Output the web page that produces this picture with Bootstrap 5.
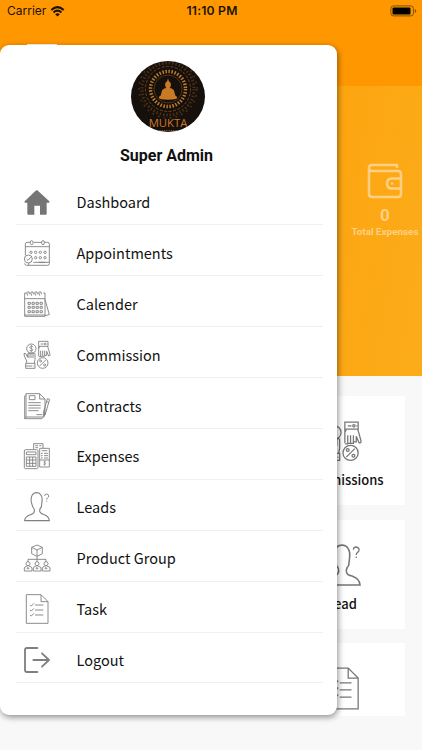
<!DOCTYPE html>
<html lang="en">

<head>
    <meta charset="UTF-8">
    <meta name="viewport" content="width=device-width, initial-scale=1.0">
    <title>Mukta</title>

    <link href="https://cdn.jsdelivr.net/npm/bootstrap@5.3.3/dist/css/bootstrap.min.css" rel="stylesheet">

    <style>
        body {
            height: 750px;
            background-color: #f8f8f8;
            color: #111;
            font-family: "Noto Sans CJK SC", "Open Sans", sans-serif;
        }

        /* status bar and header */
        .top-header {
            height: 86px;
            background-color: #ff9800;
        }

        .status-bar {
            height: 22px;
            padding: 0 5px 0 7px;
            color: #1d1300;
            font: 12px/22px Inter, sans-serif;
        }

        .status-bar > div {
            flex: 1 1 0;
        }

        .status-time {
            font-weight: 600;
            font-size: 12.2px;
            letter-spacing: .2px;
        }

        .menu-toggle {
            width: 30px;
            height: 4px;
            margin: 22px 0 0 27px;
            background-color: #fff;
        }

        /* totals */
        .hero {
            height: 290px;
            background: linear-gradient(100deg, #ff9800 20%, #fcac1a 100%);
            color: #ffd083;
            font-family: Roboto, sans-serif;
        }

        .hero-total {
            width: 74px;
            padding-top: 75px;
            font-weight: 700;
        }

        .hero-count {
            margin-top: 6px;
            font-size: 17px;
            line-height: 20px;
        }

        .hero-label {
            font-size: 9.9px;
            line-height: 13px;
            white-space: nowrap;
        }

        /* tiles */
        .tiles {
            height: 340px;
            padding: 20px 17px 0 0;
            gap: 14.5px;
            overflow: hidden;
        }

        .tile {
            width: 126px;
            height: 109px;
            flex: none;
            padding-top: 27px;
            background-color: #fff;
            font-size: 13px;
            font-weight: 500;
            line-height: 20px;
        }

        .tile svg {
            width: 37px;
            height: 37px;
            margin-bottom: 10px;
        }

        /* drawer */
        .drawer {
            top: 45px;
            left: 0;
            width: 337px;
            height: 670px;
            padding: 16px 14px 0 16px;
            background-color: #fff;
            border-radius: 9px;
            box-shadow: 1px 2px 6px rgba(0, 0, 0, .45);
        }

        .avatar {
            width: 74px;
            height: 71px;
            margin-left: -3px;
        }

        .user-name {
            margin: 12px 0 0 -6px;
            font: 700 16px/24px Roboto, sans-serif;
        }

        .drawer-menu {
            margin-top: 6.5px;
        }

        .menu-row {
            height: 50.9px;
            padding: 5px 0 0 7.5px;
            border-bottom: 1px solid #efefef;
            font-size: 14.5px;
            line-height: 20px;
        }

        .menu-row svg {
            width: 26px;
            height: 26px;
            margin-right: 27px;
        }

        .line-icon {
            fill: none;
            stroke: #777;
            stroke-width: 2.7;
            overflow: visible;
        }

        .menu-row .line-icon {
            stroke: #808080;
        }
    </style>
</head>

<body>
    <!-- shared icons -->
    <svg class="d-none">
        <symbol id="i-home" viewBox="0 0 78 78" overflow="visible">
            <path d="M39 3 76 37q3 4-2 4h-6v33q0 3-3 3H48V50H31v27H13q-3 0-3-3V41H4q-5 0-2-4L34 6q5-5 10 0z" fill="#757575" stroke="none" />
        </symbol>
        <symbol id="i-appointments" viewBox="0 0 78 78" overflow="visible">
            <path d="M4 46V12q0-5 5-5h9M29 7h22M62 7h9q5 0 5 5v59q0 5-5 5H8q-5 0-6-6M4 20h72M28 67h48M14 76v-7M44 67h20" />
            <rect x="19" y="2" width="8" height="12" rx="4" />
            <rect x="53" y="2" width="8" height="12" rx="4" />
            <circle cx="13" cy="57" r="12" />
            <path d="m8 57 4 4 8-9" />
            <g>
                <circle cx="21" cy="37" r="3.5" /><circle cx="35" cy="37" r="3.5" /><circle cx="49" cy="37" r="3.5" /><circle cx="63" cy="37" r="3.5" />
                <circle cx="35" cy="53" r="3.5" /><circle cx="49" cy="53" r="3.5" /><circle cx="63" cy="53" r="3.5" />
            </g>
        </symbol>
        <symbol id="i-calendar" viewBox="0 0 78 78" overflow="visible">
            <path d="M8 6H2v70h61V6h-5M2 23h61M2 72h61M63 25l13 46-13 3" />
            <path d="M11 14q-5-11 0-12 6-1 5 8M23 14q-5-11 0-12 6-1 5 8M35 14q-5-11 0-12 6-1 5 8M47 14q-5-11 0-12 6-1 5 8M17 6h3M29 6h3M41 6h3" />
            <path d="M12 34h7v6h-7zM24 34h7v6h-7zM36 34h7v6h-7zM48 34h7v6h-7zM12 46h7v6h-7zM24 46h7v6h-7zM36 46h7v6h-7zM48 46h7v6h-7zM12 59h7v6h-7zM24 59h7v6h-7zM36 59h7v6h-7zM48 59h7v6h-7z" />
        </symbol>
        <symbol id="i-commission" viewBox="0 0 78 78" overflow="visible">
            <circle cx="22" cy="20" r="14" />
            <path d="M27 14q-8-4-10 1c0 6 10 4 10 9q-2 5-10 1M22 9v22" stroke-width="2.2" />
            <path d="M8 64V57L1 42l-1-7q4-3 6 1l5 10V37q0-4 4-4v15M15 34q5-3 6 0v14M21 34q5-3 6 0v14M27 34q5-3 6 1v18l-2 11" />
            <path d="M5 64h28v15H5zM5 72h20M29 71v2" />
            <path d="M44-2h28v15H44zM50 6h8M68 6h2" />
            <circle cx="63" cy="6" r="2.5" />
            <path d="M44 13v29M50 26v18h-6M50 43h6V26M56 43h6V26M62 40h6V28l6 14q5 0 4-4l-4-15-3-10M44 20l3-7" />
            <circle cx="56" cy="63" r="16" />
            <circle cx="50" cy="57" r="3" />
            <circle cx="62" cy="69" r="3" />
            <path d="M65 54 47 72" />
        </symbol>
        <symbol id="i-contracts" viewBox="0 0 78 78" overflow="visible">
            <path d="M6 2h41l16 16v47l-5 7H6zM47 2v16h16M6 5l-4 4v68h52l6-7M2 77l5-6M61 48v22" />
            <path d="M16 8h17v12H16zM13 29h37M13 37h37M13 45h37M13 53h31M37 65h18" />
            <path d="m70 17 7 2-13 44-5 6-1-8zM68 26l7 2M59 61l6 2" />
        </symbol>
        <symbol id="i-expenses" viewBox="0 0 78 78" overflow="visible">
            <path d="M29 19V2h28v13M34 8h8M46 8h6M34 14h8" />
            <path d="M47 72V16h29v56zM53 23h17M51 31h5M60 31h12M51 38h5M60 38h12M51 45h5M60 45h12M47 51h29" />
            <path d="M65 56q-6-2-6 1c0 4 7 2 6 6q-1 3-7 1M62 53v15" stroke-width="2" />
            <rect x="1" y="20" width="41" height="57" rx="4" />
            <path d="M7 27h29v8H7zM7 42h29v28H7zM17 42v28M26 42v28M7 51h29M7 61h29" />
        </symbol>
        <symbol id="i-lead" viewBox="0 0 78 78" overflow="visible">
            <path d="M2 80q1-12 15-17 14-4 14-12 1-6-4-11-3-7-5-16C19 8 26-4 38-4s18 12 16 26l-2 17q-5 5-5 11c0 8 5 9 14 12q14 5 15 18z" stroke-width="3.3" />
            <path d="M62 6q0-6 6-6 6 1 6 6 0 4-4 6-2 2-2 5M68 20v3" />
        </symbol>
        <symbol id="i-group" viewBox="0 0 78 78" overflow="visible">
            <path d="m39 0 16 7v19l-16 8-16-8V7zM23 7l16 8 16-8M39 15v19M39 34v16M12 50v-7h54v7" />
            <g id="person">
                <circle cx="12" cy="56" r="6" />
                <path d="M1 78V69q1-4 7-5l4 4 4-4q7 1 8 5v9zM8 71h8" />
            </g>
            <use href="#person" x="27" />
            <use href="#person" x="54" />
        </symbol>
        <symbol id="i-task" viewBox="0 0 78 78" overflow="visible">
            <path d="M7-4h44l21 21v65H7zM51-4v21h21" />
            <path d="M33 27h25M33 42h25M33 57h25M18 27l4 3 8-8M18 42l4 3 8-8M18 57l4 3 8-8" />
        </symbol>
        <symbol id="i-logout" viewBox="0 0 78 78" overflow="visible">
            <path d="M40 3H9q-6 0-6 6v60q0 6 6 6h31M28 39h46M54 19l21 20-21 20" stroke-width="5.5" stroke-linecap="round" stroke-linejoin="round" />
        </symbol>
    </svg>

    <div class="position-relative h-100 overflow-hidden">
        <header class="top-header">
            <div class="status-bar d-flex align-items-center">
                <div class="d-flex align-items-center">
                    <span>Carrier</span>
                    <svg class="ms-1" width="15" height="11" viewBox="0 0 14 11" fill="none" stroke="#1d1300" stroke-width="2">
                        <path d="M.8 4Q7-1.700 13.200 4M3 6.400q4-3.500 8 0" />
                        <path d="M4.700 8.200Q7 6.400 9.300 8.200L7 10.600z" fill="#1d1300" stroke="none" />
                    </svg>
                </div>
                <div class="status-time text-center">11:10 PM</div>
                <div class="d-flex justify-content-end">
                    <svg width="27" height="12" viewBox="0 0 27 12">
                        <rect x=".9" y=".9" width="22.500" height="10" rx="2.500" fill="none" stroke="#80500a" />
                        <rect x="2.500" y="2.400" width="18" height="7" rx="1" fill="#000" />
                        <path d="M24.800 4v4q1.500-.5 1.500-2t-1.500-2" fill="#80500a" />
                    </svg>
                </div>
            </div>
            <div class="menu-toggle"></div>
        </header>

        <section class="hero d-flex justify-content-end">
            <div class="hero-total d-flex flex-column align-items-center">
                <svg width="38" height="38" viewBox="0 0 38 38" fill="none" stroke="#ffd083" stroke-width="2.600" stroke-linejoin="round">
                    <path d="M31 7V4H6Q3 4 3 7v26q0 3 3 3h26q3 0 3-3V13q0-3-3-3H6Q3 10 3 7" />
                    <path d="M35 17.500H26q-5 0-5 5t5 5h9" />
                    <circle cx="26" cy="22.500" r=".6" stroke-width="1.500" />
                </svg>
                <div class="hero-count">0</div>
                <div class="hero-label">Total Expenses</div>
            </div>
        </section>

        <main class="tiles d-flex flex-column align-items-end">
            <div class="tile d-flex flex-column align-items-center">
                <svg class="line-icon"><use href="#i-commission" /></svg>
                <span>Commissions</span>
            </div>
            <div class="tile d-flex flex-column align-items-center">
                <svg class="line-icon"><use href="#i-lead" /></svg>
                <span>Lead</span>
            </div>
            <div class="tile d-flex flex-column align-items-center">
                <svg class="line-icon"><use href="#i-task" /></svg>
            </div>
        </main>

        <aside class="drawer position-absolute">
            <div class="d-flex flex-column align-items-center">
                <svg class="avatar" viewBox="0 0 74 71">
                    <defs>
                        <clipPath id="round"><ellipse cx="37" cy="35.500" rx="37" ry="35.500" /></clipPath>
                    </defs>
                    <g clip-path="url(#round)">
                        <rect width="74" height="71" fill="#15100c" />
                        <g fill="none" stroke="#6d431d">
                            <circle cx="37" cy="28" r="26" stroke-width="3" stroke-dasharray="1.500 1.900" opacity=".6" />
                            <circle cx="37" cy="28" r="22.500" stroke-width="1" stroke-dasharray="3 1.500" />
                            <circle cx="37" cy="28" r="29" stroke-width="1.500" stroke-dasharray="2 4" opacity=".6" />
                            <circle cx="37" cy="28" r="17.500" stroke="#bd762a" stroke-width="3.500" stroke-dasharray="1.500 1.550" />
                            <circle cx="37" cy="28" r="14" stroke-width=".7" />
                        </g>
                        <!-- seated figure -->
                        <path fill="#c97a25" d="M37 17.500l1 3q2.500 1 1.800 4.500l-1 2q4 .7 4.500 3.500l1 4q2.500 1 1.700 2.500-.5 1.500-9 1.700-8.500-.2-9-1.700-.8-1.500 1.700-2.500l1-4q.5-2.800 4.500-3.500l-1-2q-.7-3.500 1.800-4.500z" />
                        <text x="37" y="66" text-anchor="middle" font-family="Open Sans, sans-serif" font-size="11.300" fill="#d0752a">MUKTA</text>
                        <path d="M26 69.500h22" stroke="#7d4a20" stroke-width="1.200" stroke-dasharray="1.500 .8" />
                    </g>
                </svg>
                <div class="user-name">Super Admin</div>
            </div>

            <nav class="drawer-menu">
                <div class="menu-row d-flex align-items-center"><svg class="line-icon"><use href="#i-home" /></svg>Dashboard</div>
                <div class="menu-row d-flex align-items-center"><svg class="line-icon"><use href="#i-appointments" /></svg>Appointments</div>
                <div class="menu-row d-flex align-items-center"><svg class="line-icon"><use href="#i-calendar" /></svg>Calender</div>
                <div class="menu-row d-flex align-items-center"><svg class="line-icon"><use href="#i-commission" /></svg>Commission</div>
                <div class="menu-row d-flex align-items-center"><svg class="line-icon"><use href="#i-contracts" /></svg>Contracts</div>
                <div class="menu-row d-flex align-items-center"><svg class="line-icon"><use href="#i-expenses" /></svg>Expenses</div>
                <div class="menu-row d-flex align-items-center"><svg class="line-icon"><use href="#i-lead" /></svg>Leads</div>
                <div class="menu-row d-flex align-items-center"><svg class="line-icon"><use href="#i-group" /></svg>Product Group</div>
                <div class="menu-row d-flex align-items-center"><svg class="line-icon"><use href="#i-task" /></svg>Task</div>
                <div class="menu-row d-flex align-items-center"><svg class="line-icon"><use href="#i-logout" /></svg>Logout</div>
            </nav>
        </aside>
    </div>

    <script src="https://cdn.jsdelivr.net/npm/bootstrap@5.3.3/dist/js/bootstrap.bundle.min.js"></script>
</body>

</html>
